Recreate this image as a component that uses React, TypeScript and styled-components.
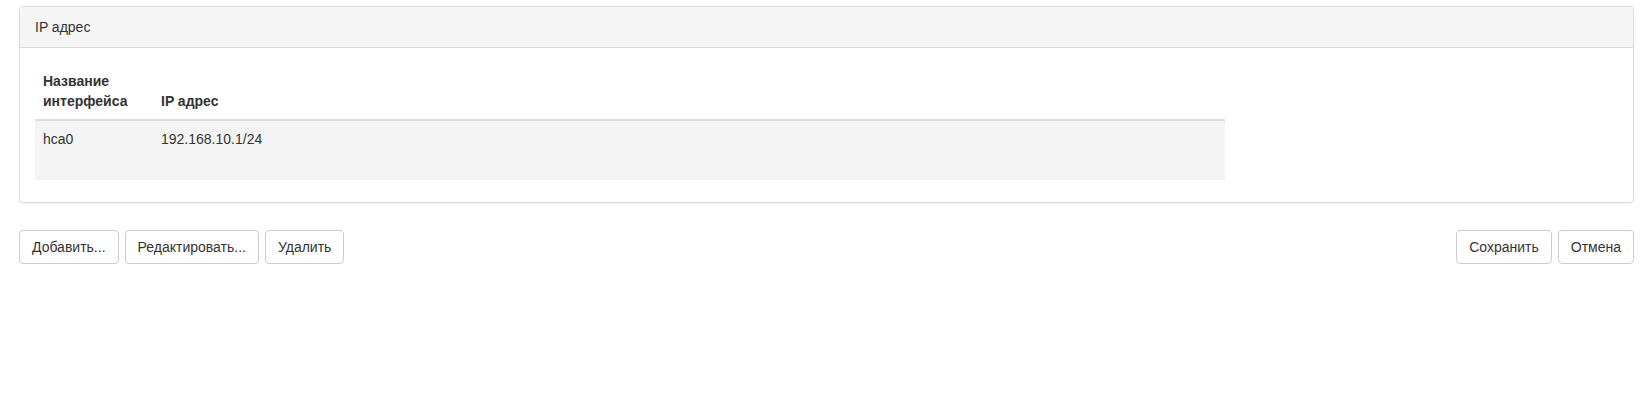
import React from "react";
import styled, { createGlobalStyle } from "styled-components";

const Global = createGlobalStyle`
  html, body { margin: 0; padding: 0; background: #fff; }
  body {
    font-family: "Liberation Sans", Arial, Helvetica, sans-serif;
    font-size: 14px;
    line-height: 20px;
    color: #333;
  }
  * { box-sizing: border-box; }
`;

const Page = styled.div`
  padding: 6px 12px 0 19px;
`;

const Panel = styled.section`
  border: 1px solid #ddd;
  border-radius: 4px;
  background: #fff;
  box-shadow: 0 1px 1px rgba(0, 0, 0, 0.05);
`;

const PanelHeading = styled.div`
  height: 41px;
  padding: 10px 15px;
  background: #f5f5f5;
  border-bottom: 1px solid #ddd;
  border-radius: 3px 3px 0 0;
  color: #333;
`;

const PanelBody = styled.div`
  padding: 15px 15px 22px 15px;
`;

const Table = styled.table`
  width: calc(75% + 3px);
  border-collapse: collapse;
  border-spacing: 0;
`;

const Th = styled.th<{ $w?: number }>`
  text-align: left;
  vertical-align: bottom;
  font-weight: bold;
  padding: 8px;
  border-bottom: 2px solid #ddd;
  ${(p) => (p.$w ? `width: ${p.$w}px;` : "")}
`;

const Row = styled.tr`
  background: #f4f4f4;
`;

const Td = styled.td`
  vertical-align: top;
  padding: 8px;
  height: 60px;
`;

const Toolbar = styled.div`
  display: flex;
  justify-content: space-between;
  margin-top: 27px;
`;

const Group = styled.div`
  display: flex;
  gap: 6px;
`;

const Button = styled.button`
  font-family: "Liberation Sans", Arial, Helvetica, sans-serif;
  font-size: 14px;
  line-height: 20px;
  color: #333;
  background: #fff;
  border: 1px solid #ccc;
  border-radius: 4px;
  padding: 6px 12px;
  height: 34px;
  cursor: pointer;
`;

export default function App() {
  return (
    <Page>
      <Global />
      <Panel>
        <PanelHeading>IP адрес</PanelHeading>
        <PanelBody>
          <Table>
            <thead>
              <tr>
                <Th $w={118}>
                  Название
                  <br />
                  интерфейса
                </Th>
                <Th>IP адрес</Th>
              </tr>
            </thead>
            <tbody>
              <Row>
                <Td>hca0</Td>
                <Td>192.168.10.1/24</Td>
              </Row>
            </tbody>
          </Table>
        </PanelBody>
      </Panel>
      <Toolbar>
        <Group>
          <Button>Добавить...</Button>
          <Button>Редактировать...</Button>
          <Button>Удалить</Button>
        </Group>
        <Group>
          <Button>Сохранить</Button>
          <Button>Отмена</Button>
        </Group>
      </Toolbar>
    </Page>
  );
}
